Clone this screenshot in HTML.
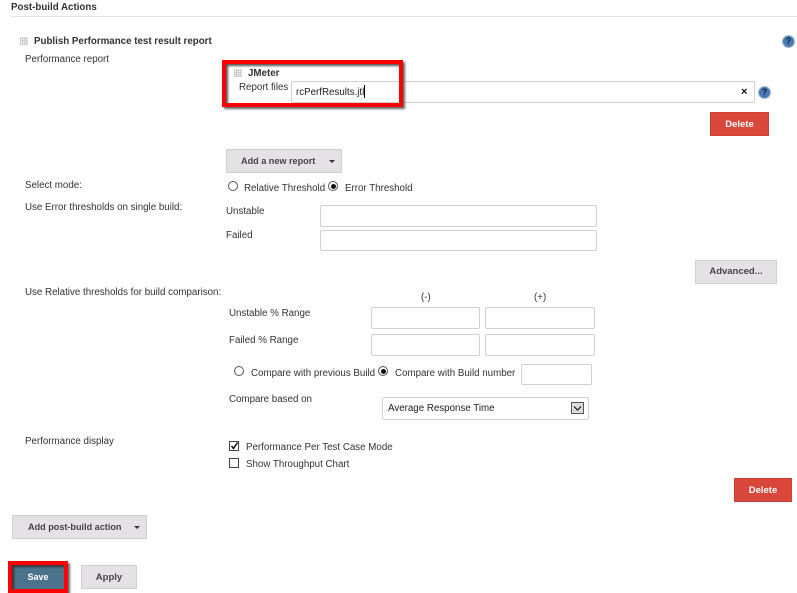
<!DOCTYPE html>
<html><head><meta charset="utf-8"><style>
html,body{margin:0;padding:0;background:#fff}
body{width:797px;height:593px;position:relative;overflow:hidden;font-family:"Liberation Sans",Arial,sans-serif;font-size:9.75px;color:#333;filter:blur(.3px)}
.t{position:absolute;white-space:nowrap;line-height:12px;margin-top:1px}
.b{font-weight:bold}
.i{position:absolute;box-sizing:border-box;background:#fff;border:1px solid #d0d0d0;border-radius:2px}
.btn{position:absolute;box-sizing:border-box;background:#e4e2e4;border:1px solid #d0d0d0;color:#444;font-weight:bold;text-align:center;font-size:9.5px;white-space:nowrap}
.del{position:absolute;box-sizing:border-box;background:#d9473a;border:1px solid #cf4034;color:#fff;font-weight:bold;text-align:center;font-size:9.5px}
.arr{position:absolute;width:0;height:0;border-left:3px solid transparent;border-right:3px solid transparent;border-top:3px solid #333}
.h{position:absolute;width:13px;height:13px;border-radius:50%;background:#4a7ab5;border:1px solid #a9bdd6;box-sizing:border-box;color:#123;font:bold 9px/11px "Liberation Sans",sans-serif;text-align:center}
.g{position:absolute;width:8px;height:8px;background:repeating-linear-gradient(0deg,#ccc 0 1px,transparent 1px 2px),repeating-linear-gradient(90deg,#ccc 0 1px,transparent 1px 2px),#fff}
.r{position:absolute;box-sizing:border-box;width:10px;height:10px;border:1px solid #555;border-radius:50%;background:#fff}
.r.on::after{content:"";position:absolute;left:1.5px;top:1.5px;width:5px;height:5px;border-radius:50%;background:#111}
.c{position:absolute;box-sizing:border-box;width:10px;height:10px;border:1px solid #444;background:#fff}
</style></head><body>
<div class="t b" style="left:11px;top:1px">Post-build Actions</div>
<div style="position:absolute;left:11px;top:16px;width:786px;height:1px;background:#e2e2e2"></div>
<div class="g" style="left:20px;top:37px"></div>
<div class="t b" style="left:34px;top:35px">Publish Performance test result report</div>
<div class="h" style="left:782px;top:35px">?</div>
<div class="t" style="left:25px;top:53px">Performance report</div>

<div class="i" style="left:291px;top:81px;width:464px;height:22px"></div>
<div class="g" style="left:234px;top:69px"></div>
<div class="t b" style="left:248px;top:67px">JMeter</div>
<div class="t" style="left:239px;top:81px">Report files</div>
<div class="t" style="left:296px;top:86px;color:#222">rcPerfResults.jtl</div>
<div style="position:absolute;left:364px;top:85px;width:1px;height:13px;background:#000"></div>
<div class="t" style="left:741px;top:85px;color:#111;font-size:11px;font-weight:bold">×</div>
<div class="h" style="left:758px;top:86px">?</div>
<div style="position:absolute;box-sizing:border-box;left:222px;top:60px;width:181px;height:47px;border:4px solid #f00;box-shadow:inset 2px 2px 2px #555,2px 2px 2px #666"></div>

<div class="del" style="left:710px;top:112px;width:59px;height:24px;line-height:23px">Delete</div>
<div class="btn" style="left:226px;top:149px;width:116px;height:24px;line-height:22px;text-align:left;padding-left:14px;font-size:9.1px">Add a new report</div>
<div class="arr" style="left:329px;top:160px"></div>

<div class="t" style="left:25px;top:179px">Select mode:</div>
<div class="r" style="left:228px;top:181px"></div>
<div class="t" style="left:244px;top:182px">Relative Threshold</div>
<div class="r on" style="left:328px;top:181px"></div>
<div class="t" style="left:345px;top:182px">Error Threshold</div>

<div class="t" style="left:25px;top:201px">Use Error thresholds on single build:</div>
<div class="t" style="left:226px;top:205px">Unstable</div>
<div class="i" style="left:320px;top:205px;width:277px;height:22px"></div>
<div class="t" style="left:226px;top:229px">Failed</div>
<div class="i" style="left:320px;top:230px;width:277px;height:21px"></div>
<div class="btn" style="left:695px;top:260px;width:82px;height:24px;line-height:22px">Advanced...</div>

<div class="t" style="left:25px;top:286px">Use Relative thresholds for build comparison:</div>
<div class="t" style="left:421px;top:291px">(-)</div>
<div class="t" style="left:534px;top:291px">(+)</div>
<div class="t" style="left:229px;top:307px">Unstable % Range</div>
<div class="i" style="left:371px;top:307px;width:109px;height:22px"></div>
<div class="i" style="left:485px;top:307px;width:110px;height:22px"></div>
<div class="t" style="left:229px;top:334px">Failed % Range</div>
<div class="i" style="left:371px;top:334px;width:109px;height:22px"></div>
<div class="i" style="left:485px;top:334px;width:110px;height:22px"></div>
<div class="r" style="left:234px;top:366px"></div>
<div class="t" style="left:251px;top:367px">Compare with previous Build</div>
<div class="r on" style="left:378px;top:366px"></div>
<div class="t" style="left:395px;top:367px">Compare with Build number</div>
<div class="i" style="left:521px;top:364px;width:71px;height:21px"></div>
<div class="t" style="left:229px;top:393px">Compare based on</div>
<div class="i" style="left:382px;top:397px;width:207px;height:23px"></div>
<div class="t" style="left:388px;top:402px;color:#222">Average Response Time</div>
<div style="position:absolute;box-sizing:border-box;left:571px;top:402px;width:13px;height:12px;background:#dcdcdc;border:1px solid #555"></div>
<svg style="position:absolute;left:573px;top:405px" width="9" height="7"><path d="M1 1.5 L4.5 5 L8 1.5" fill="none" stroke="#111" stroke-width="1.2"/></svg>

<div class="t" style="left:25px;top:435px">Performance display</div>
<div class="c" style="left:229px;top:441px"></div>
<svg style="position:absolute;left:229px;top:440px" width="11" height="11"><path d="M2.5 6 L4.5 8.5 L8.5 2.5" fill="none" stroke="#111" stroke-width="1.5"/></svg>
<div class="t" style="left:246px;top:441px">Performance Per Test Case Mode</div>
<div class="c" style="left:229px;top:458px"></div>
<div class="t" style="left:246px;top:458px">Show Throughput Chart</div>

<div class="del" style="left:734px;top:478px;width:58px;height:24px;line-height:23px">Delete</div>
<div class="btn" style="left:12px;top:515px;width:135px;height:24px;line-height:23px;text-align:left;padding-left:15px;font-size:9.1px">Add post-build action</div>
<div class="arr" style="left:134px;top:526px"></div>

<div style="position:absolute;box-sizing:border-box;left:8px;top:561px;width:60px;height:32px;background:#4b748c;border:4px solid #f00;box-shadow:inset 2px 2px 2px #333,2px 2px 2px #666;color:#fff;font-weight:bold;font-size:9px;text-align:center;line-height:24px">Save</div>
<div class="btn" style="left:81px;top:565px;width:56px;height:24px;line-height:23px">Apply</div>
</body></html>
